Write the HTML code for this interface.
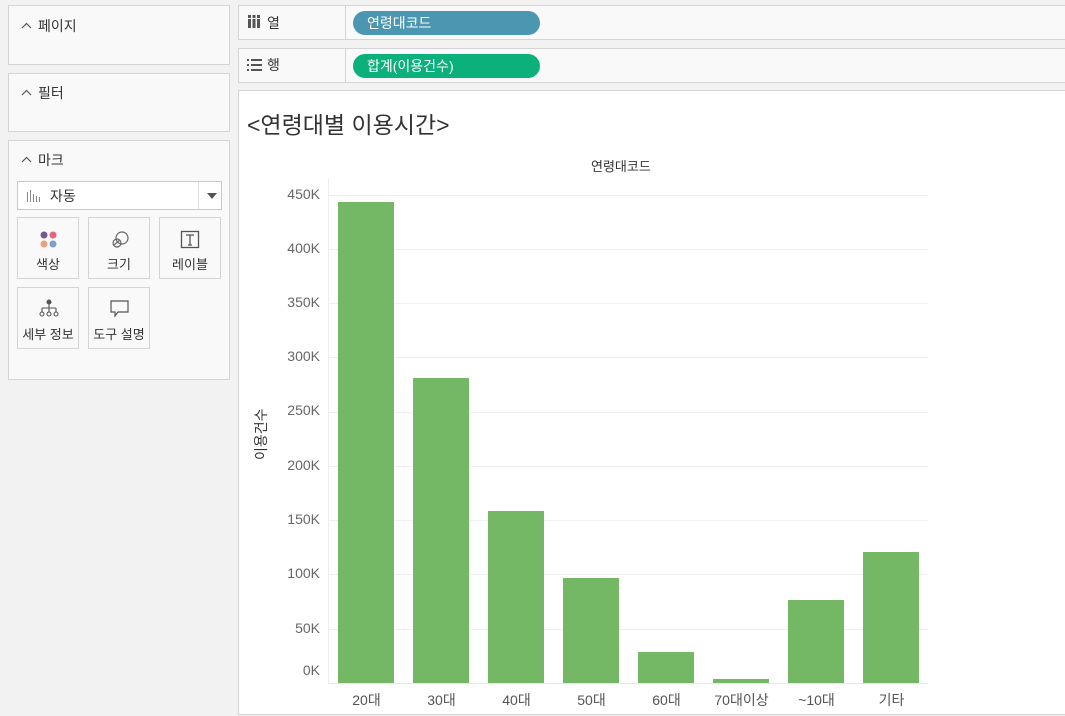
<!DOCTYPE html>
<html><head><meta charset="utf-8"><style>
*{margin:0;padding:0;box-sizing:border-box}
body{width:1065px;height:716px;background:#f2f2f2;position:relative;overflow:hidden;font-family:"Liberation Sans","Noto Sans CJK KR",sans-serif;color:#333}
.a{position:absolute}
.panel{position:absolute;background:#f9f9f9;border:1px solid #d4d4d4}
.ph{position:absolute;left:12px;font-size:14px;color:#333}
.ph svg{vertical-align:middle;margin-right:6px;position:relative;top:-2px}
.card{position:absolute;width:62px;height:62px;border:1px solid #d4d4d4;background:#f9f9f9;font-size:13px;text-align:center}
.card .t{position:absolute;left:0;right:0;top:36px;color:#333}
.yl{position:absolute;width:60px;left:260px;text-align:right;font-size:14px;color:#666}
.g{position:absolute;left:329px;width:599px;height:1px;background:#efefef}
.bar{position:absolute;background:#74b865;width:56px}
.xl{position:absolute;width:75px;text-align:center;font-size:14px;color:#555;top:690px}
.pill{position:absolute;height:24px;border-radius:12px;color:#fff;font-size:14px;padding-left:14px;line-height:24px}
</style></head><body>
<div class="panel" style="left:8px;top:5px;width:222px;height:60px"><div class="ph" style="top:10px"><svg width="11" height="7"><path d="M1 6l4.5-4.5L10 6" fill="none" stroke="#555" stroke-width="1.2"/></svg>페이지</div></div>
<div class="panel" style="left:8px;top:73px;width:222px;height:59px"><div class="ph" style="top:9px"><svg width="11" height="7"><path d="M1 6l4.5-4.5L10 6" fill="none" stroke="#555" stroke-width="1.2"/></svg>필터</div></div>
<div class="panel" style="left:8px;top:140px;width:222px;height:240px">
<div class="ph" style="top:9px"><svg width="11" height="7"><path d="M1 6l4.5-4.5L10 6" fill="none" stroke="#555" stroke-width="1.2"/></svg>마크</div>
<div class="a" style="left:8px;top:40px;width:205px;height:29px;border:1px solid #c8c8c8;background:#fff">
<svg class="a" style="left:8px;top:7px" width="16" height="14"><g fill="#888"><rect x="1" y="3" width="1" height="10"/><rect x="4" y="1" width="1" height="12"/><rect x="7" y="5" width="1" height="8"/><rect x="10" y="7" width="1" height="6"/><rect x="13" y="8" width="1" height="5"/></g></svg>
<span class="a" style="left:32px;top:4px;font-size:14px">자동</span>
<div class="a" style="left:180px;top:0;width:1px;height:27px;background:#ddd"></div>
<svg class="a" style="left:188px;top:10px" width="12" height="8"><path d="M1 1h10L6 7z" fill="#555"/></svg></div>
<div class="card" style="left:8px;top:76px"><svg class="a" style="left:21px;top:12px" width="20" height="20"><circle cx="5" cy="5" r="3.5" fill="#6f5c8e"/><circle cx="14" cy="5" r="3.5" fill="#e8627a"/><circle cx="5" cy="14" r="3.5" fill="#e9a17a"/><circle cx="14" cy="14" r="3.5" fill="#7ea0d0"/></svg><div class="t">색상</div></div>
<div class="card" style="left:79px;top:76px"><svg class="a" style="left:20px;top:11px" width="22" height="22" fill="none" stroke="#666" stroke-width="1.2"><circle cx="13" cy="9" r="6"/><circle cx="8" cy="14" r="4"/><path d="M5 16l6-5"/></svg><div class="t">크기</div></div>
<div class="card" style="left:150px;top:76px"><svg class="a" style="left:20px;top:12px" width="20" height="20"><rect x="1.5" y="1.5" width="17" height="16" fill="none" stroke="#555" stroke-width="1.3"/><path d="M6 5h8M10 5v10M8 15h4" stroke="#555" stroke-width="1.3"/></svg><div class="t">레이블</div></div>
<div class="card" style="left:8px;top:146px"><svg class="a" style="left:20px;top:10px" width="22" height="22" fill="none" stroke="#555" stroke-width="1.1"><circle cx="11" cy="4" r="2" fill="#555"/><path d="M11 6v4M4 10h14M4 10v4M11 10v4M18 10v4"/><circle cx="4" cy="16" r="2"/><circle cx="11" cy="16" r="2"/><circle cx="18" cy="16" r="2"/></svg><div class="t">세부 정보</div></div>
<div class="card" style="left:79px;top:146px"><svg class="a" style="left:20px;top:11px" width="22" height="20" fill="none" stroke="#555" stroke-width="1.2"><path d="M2 2h17v11H9l-3 4v-4H2z"/></svg><div class="t">도구 설명</div></div>
</div>
<div class="a" style="left:238px;top:5px;width:830px;height:35px;background:#f9f9f9;border:1px solid #d4d4d4">
<svg class="a" style="left:8px;top:9px" width="14" height="14"><g fill="#555"><rect x="1" y="0" width="3" height="3"/><rect x="1" y="4" width="3" height="9"/><rect x="5.5" y="0" width="3" height="3"/><rect x="5.5" y="4" width="3" height="9"/><rect x="10" y="0" width="3" height="3"/><rect x="10" y="4" width="3" height="9"/></g></svg>
<span class="a" style="left:28px;top:7px;font-size:14px">열</span>
<div class="a" style="left:106px;top:0;width:1px;height:33px;background:#d4d4d4"></div>
<div class="pill" style="left:114px;top:5px;width:187px;background:#4b97b1">연령대코드</div></div>
<div class="a" style="left:238px;top:48px;width:830px;height:35px;background:#f9f9f9;border:1px solid #d4d4d4">
<svg class="a" style="left:8px;top:9px" width="16" height="14"><g fill="#555"><rect x="0" y="1" width="2" height="2"/><rect x="4" y="1" width="11" height="2"/><rect x="0" y="6" width="2" height="2"/><rect x="4" y="6" width="11" height="2"/><rect x="0" y="11" width="2" height="2"/><rect x="4" y="11" width="11" height="2"/></g></svg>
<span class="a" style="left:28px;top:6px;font-size:14px">행</span>
<div class="a" style="left:106px;top:0;width:1px;height:33px;background:#d4d4d4"></div>
<div class="pill" style="left:114px;top:5px;width:187px;background:#0bb07b">합계(이용건수)</div></div>
<div class="a" style="left:238px;top:90px;width:830px;height:625px;background:#fff;border:1px solid #d4d4d4"></div>
<div class="a" style="left:247px;top:106px;font-size:23px;color:#333">&lt;연령대별 이용시간&gt;</div>
<div class="a" style="left:591px;top:156px;font-size:13px;color:#333">연령대코드</div>
<div class="a" style="left:328px;top:178px;width:1px;height:506px;background:#eee"></div>
<div class="a" style="left:329px;top:683px;width:599px;height:1px;background:#e6e6e6"></div>
<div class="g" style="top:195px"></div><div class="g" style="top:249px"></div><div class="g" style="top:303px"></div><div class="g" style="top:357px"></div><div class="g" style="top:412px"></div><div class="g" style="top:466px"></div><div class="g" style="top:520px"></div><div class="g" style="top:574px"></div><div class="g" style="top:629px"></div>
<div class="yl" style="top:186px">450K</div><div class="yl" style="top:240px">400K</div><div class="yl" style="top:294px">350K</div><div class="yl" style="top:348px">300K</div><div class="yl" style="top:402px">250K</div><div class="yl" style="top:457px">200K</div><div class="yl" style="top:511px">150K</div><div class="yl" style="top:565px">100K</div><div class="yl" style="top:620px">50K</div><div class="yl" style="top:662px">0K</div>
<div class="a" style="left:251px;top:460px;transform:rotate(-90deg);transform-origin:0 0;font-size:14px;color:#333">이용건수</div>
<div class="bar" style="left:338px;top:202px;height:481px"></div>
<div class="bar" style="left:413px;top:378px;height:305px"></div>
<div class="bar" style="left:488px;top:511px;height:172px"></div>
<div class="bar" style="left:563px;top:578px;height:105px"></div>
<div class="bar" style="left:638px;top:652px;height:31px"></div>
<div class="bar" style="left:713px;top:679px;height:4px"></div>
<div class="bar" style="left:788px;top:600px;height:83px"></div>
<div class="bar" style="left:863px;top:552px;height:131px"></div>
<div class="xl" style="left:329px">20대</div><div class="xl" style="left:404px">30대</div><div class="xl" style="left:479px">40대</div><div class="xl" style="left:554px">50대</div><div class="xl" style="left:629px">60대</div><div class="xl" style="left:704px">70대이상</div><div class="xl" style="left:779px">~10대</div><div class="xl" style="left:854px">기타</div>
</body></html>
